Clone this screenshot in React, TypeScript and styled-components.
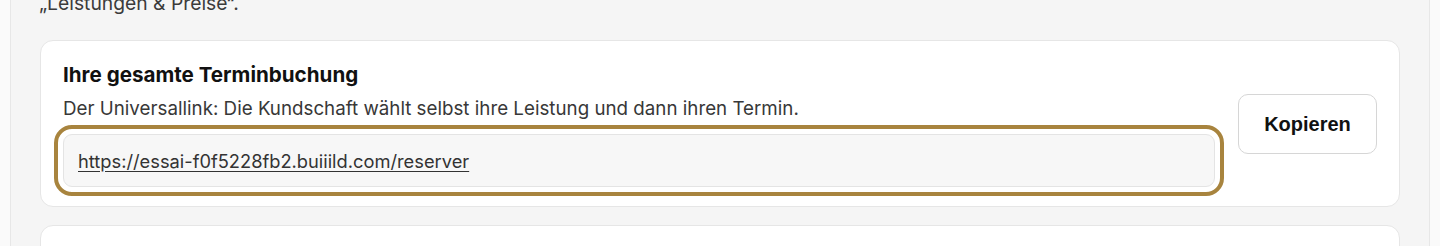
import React from 'react';
import styled, { createGlobalStyle } from 'styled-components';

const GlobalStyle = createGlobalStyle`
  html, body {
    margin: 0;
    padding: 0;
    background: #fafafa;
    font-family: 'Inter', 'Noto Sans', sans-serif;
    overflow: hidden;
  }
`;

const Page = styled.div`
  height: 246px;
  overflow: hidden;
  padding: 0 10px;
`;

const Panel = styled.section`
  box-sizing: border-box;
  height: 100%;
  background: #f5f5f5;
  border-left: 1px solid #e7e7e7;
  border-right: 1px solid #e7e7e7;
  padding: 0 29px;
  display: flex;
  flex-direction: column;
  gap: 18px;
`;

const Intro = styled.p`
  margin: -10px 0 6px -1px;
  font-size: 19.3px;
  line-height: 26px;
  color: #3b3b3b;
`;

const Card = styled.div`
  flex-shrink: 0;
  display: flex;
  align-items: center;
  gap: 14px;
  background: #ffffff;
  border: 1px solid #e6e6e6;
  border-radius: 13px;
  padding: 20px 22px 19px;
`;

const Body = styled.div`
  flex: 1;
  min-width: 0;
  display: flex;
  flex-direction: column;
`;

const Title = styled.h3`
  margin: 0;
  font-size: 20.6px;
  line-height: 28px;
  font-weight: 650;
  color: #111111;
`;

const Description = styled.p`
  margin: 7px 0 12px;
  font-size: 18.75px;
  line-height: 26px;
  color: #383838;
`;

const LinkField = styled.div`
  box-sizing: border-box;
  height: 53px;
  display: flex;
  align-items: center;
  padding: 0 14px;
  background: #f7f7f7;
  border: 1px solid #e4e4e4;
  border-radius: 9px;
  outline: 4px solid #a8843e;
  outline-offset: 5px;
  margin-right: 9px;
`;

const Link = styled.a`
  font-size: 18.3px;
  line-height: 26px;
  color: #333333;
  text-decoration: underline;
  text-underline-offset: 3px;
`;

const CopyButton = styled.button`
  flex-shrink: 0;
  box-sizing: border-box;
  width: 139px;
  height: 60px;
  background: #ffffff;
  border: 1px solid #d6d6d6;
  border-radius: 10px;
  font-family: 'Liberation Sans', Arial, sans-serif;
  font-weight: 700;
  font-size: 20px;
  color: #111111;
  cursor: pointer;
`;

const EmptyCard = styled.div`
  flex-shrink: 0;
  height: 80px;
  background: #ffffff;
  border: 1px solid #e6e6e6;
  border-radius: 13px;
`;

export default function App() {
  return (
    <>
      <GlobalStyle />
      <Page>
        <Panel>
          <Intro>„Leistungen &amp; Preise“.</Intro>
          <Card>
            <Body>
              <Title>Ihre gesamte Terminbuchung</Title>
              <Description>
                Der Universallink: Die Kundschaft wählt selbst ihre Leistung und dann ihren Termin.
              </Description>
              <LinkField>
                <Link href="#">https://essai-f0f5228fb2.buiiild.com/reserver</Link>
              </LinkField>
            </Body>
            <CopyButton>Kopieren</CopyButton>
          </Card>
          <EmptyCard />
        </Panel>
      </Page>
    </>
  );
}
